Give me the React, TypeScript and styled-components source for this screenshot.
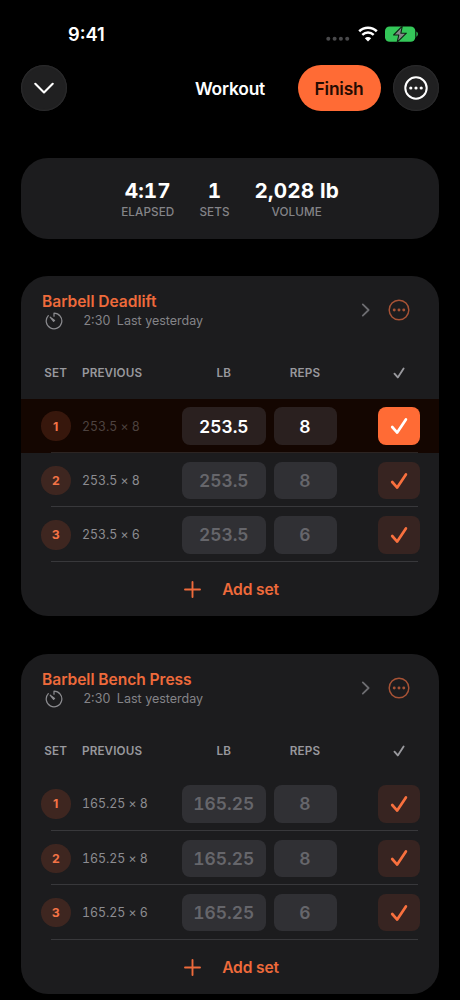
import React from "react";
import styled, { createGlobalStyle } from "styled-components";

const accent = "#ff6b35";

const GlobalStyle = createGlobalStyle`
  *, *::before, *::after { box-sizing: border-box; }
  body { margin: 0; background: #000; }
  button { border: 0; padding: 0; margin: 0; font: inherit; color: inherit; background: none; }
  svg { display: block; flex: none; }
`;

const Screen = styled.main`
  width: 460px;
  height: 1000px;
  overflow: hidden;
  background: #000;
  color: #fff;
  font-family: Inter, "Liberation Sans", sans-serif;
  padding: 0 21px;
`;

const StatusBar = styled.div`
  height: 65px;
  padding: 3px 21px 0 47px;
  display: flex;
  align-items: center;
  justify-content: space-between;
`;

const Clock = styled.span`
  font-size: 18.3px;
  font-weight: 600;
  letter-spacing: 0;
  line-height: 24px;
`;

const StatusIcons = styled.div`
  display: flex;
  align-items: center;
  gap: 7.5px;
`;

const NavBar = styled.header`
  height: 46px;
  display: grid;
  grid-template-columns: 1fr auto 1fr;
  align-items: center;
`;

const NavTitle = styled.h1`
  margin: 0;
  padding-top: 1px;
  font-size: 17.4px;
  font-weight: 600;
  letter-spacing: -0.2px;
  line-height: 24px;
`;

const NavActions = styled.div`
  display: flex;
  justify-content: flex-end;
  gap: 12.5px;
`;

const RoundButton = styled.button`
  width: 46px;
  height: 46px;
  border-radius: 50%;
  display: flex;
  align-items: center;
  justify-content: center;
  background: #202021;
  box-shadow: inset 0 0 1.5px 0.5px #343436;
`;

const FinishButton = styled.button`
  width: 83px;
  height: 46px;
  border-radius: 23px;
  background: ${accent};
  color: #260b02;
  font-size: 17.4px;
  font-weight: 600;
  letter-spacing: -0.2px;
`;

const Summary = styled.section`
  height: 80.6px;
  margin-top: 47px;
  padding-top: 20px;
  border-radius: 27px;
  background: #1c1c1e;
  display: flex;
  justify-content: center;
  gap: 25px;
`;

const Stat = styled.div`
  display: flex;
  flex-direction: column;
  align-items: center;
`;

const StatValue = styled.strong`
  font-size: 20.7px;
  line-height: 26px;
  font-weight: 650;
  font-variant-numeric: tabular-nums;
  letter-spacing: 0.12px;
`;

const StatLabel = styled.span`
  font-size: 11.7px;
  line-height: 16px;
  font-weight: 500;
  letter-spacing: 0.1px;
  color: #848488;
`;

const Card = styled.section`
  height: 340.6px;
  margin-top: 37.2px;
  border-radius: 27px;
  overflow: hidden;
  background: #1c1c1e;
`;

const CardHeader = styled.header`
  height: 70px;
  padding: 15px 29.2px 0 21px;
  display: flex;
`;

const Heading = styled.div`
  flex: 1;
`;

const ExerciseName = styled.h2`
  margin: 0;
  font-size: 15.6px;
  line-height: 21px;
  font-weight: 600;
  letter-spacing: -0.05px;
  color: #ee6a3b;
`;

const Meta = styled.div`
  display: flex;
  align-items: center;
  padding-left: 3px;
  height: 18px;
  font-size: 12.5px;
  color: #848488;
`;

const RestTime = styled.span`
  margin: 0 6.5px 0 20.5px;
`;

const HeaderActions = styled.div`
  display: flex;
  align-items: center;
  gap: 18px;
  height: 39px;
`;

const setColumns = "29.5px 111.5px 83.5px 8px 63px 1fr 42px";

const HeadRow = styled.div`
  height: 53.2px;
  padding: 19px 19px 0 20px;
  display: grid;
  grid-template-columns: ${setColumns};
  align-items: start;
  font-size: 11.7px;
  font-weight: 600;
  line-height: 16px;
  letter-spacing: 0.12px;
  color: #98989d;
`;

const Head = styled.span<{ $column: number; $leading?: boolean }>`
  grid-column: ${(p) => p.$column};
  display: flex;
  height: 16px;
  align-items: center;
  justify-content: ${(p) => (p.$leading ? "flex-start" : "center")};
  padding-left: ${(p) => (p.$leading ? "11.5px" : "0")};
`;

const Row = styled.div<{ $done: boolean }>`
  height: 54.4px;
  padding: 0 19px 0 20px;
  display: grid;
  grid-template-columns: ${setColumns};
  align-items: center;
  background:
    linear-gradient(${(p) => (p.$done ? "#2c2422" : "#38383b")}, ${(p) => (p.$done ? "#2c2422" : "#38383b")})
      30px 53px / 367px 1px no-repeat,
    ${(p) => (p.$done ? "#140601" : "transparent")};
`;

const SetBadge = styled.span<{ $done: boolean }>`
  width: 29.5px;
  height: 29.5px;
  border-radius: 50%;
  display: flex;
  align-items: center;
  justify-content: center;
  background: ${(p) => (p.$done ? "#37170c" : "#3e2620")};
  color: #f37346;
  font-size: 12.3px;
  font-weight: 700;
`;

const Previous = styled.span<{ $done: boolean }>`
  padding-left: 11.5px;
  font-size: 12.4px;
  letter-spacing: -0.05px;
  font-variant-numeric: tabular-nums;
  font-feature-settings: "calt" 0;
  color: ${(p) => (p.$done ? "#4d423f" : "#8c8c91")};
`;

const Field = styled.span<{ $column: number; $done: boolean }>`
  grid-column: ${(p) => p.$column};
  height: 37.5px;
  border-radius: 8px;
  display: flex;
  align-items: center;
  justify-content: center;
  background: ${(p) => (p.$done ? "#2a201f" : "#303034")};
  color: ${(p) => (p.$done ? "#fff" : "#66666b")};
  font-size: 17.4px;
  font-weight: 600;
  font-variant-numeric: tabular-nums;
`;

const CheckButton = styled.button<{ $done: boolean }>`
  grid-column: 7;
  width: 42px;
  height: 37.5px;
  border-radius: 8px;
  display: flex;
  align-items: center;
  justify-content: center;
  background: ${(p) => (p.$done ? accent : "#372421")};
  color: ${(p) => (p.$done ? "#fff" : "#f8703e")};
`;

const AddSet = styled.button`
  width: 100%;
  height: 54px;
  padding-left: 3px;
  padding-top: 1px;
  display: flex;
  align-items: center;
  justify-content: center;
  gap: 21px;
  color: #ee6a3b;
  font-size: 15.6px;
  font-weight: 600;
  letter-spacing: -0.15px;
`;

function CheckIcon({ size, width }: { size: number; width: number }) {
  return (
    <svg width={size} height={size} viewBox="0 0 18 18" fill="none" stroke="currentColor" strokeWidth={width} strokeLinecap="round" strokeLinejoin="round">
      <path d="M2.2 10 7.2 15.6 15.9 2.4" />
    </svg>
  );
}

function MoreIcon({ size, color, stroke }: { size: number; color: string; stroke: number }) {
  return (
    <svg width={size} height={size} viewBox="0 0 24 24" fill="none">
      <circle cx="12" cy="12" r="10.7" stroke={color} strokeWidth={stroke} />
      <circle cx="6.8" cy="12" r="1.6" fill={color} />
      <circle cx="12" cy="12" r="1.6" fill={color} />
      <circle cx="17.2" cy="12" r="1.6" fill={color} />
    </svg>
  );
}

function TimerIcon() {
  return (
    <svg width="18" height="18" viewBox="0 0 18 18" fill="none" stroke="#8a8a8e" strokeWidth="1.25" strokeLinecap="round" strokeLinejoin="round">
      <path d="M9 4.2V1.2A7.8 7.8 0 1 1 3.3 3.7" />
      <path d="M5.2 5.2 9.6 8.4 8.6 9.4Z" fill="#8a8a8e" />
    </svg>
  );
}

function SignalDots() {
  return (
    <svg width="24" height="14" viewBox="0 0 24 14" fill="#49494b">
      {[2.3, 8.6, 14.9, 21.2].map((x) => (
        <circle key={x} cx={x} cy="11.8" r="2" />
      ))}
    </svg>
  );
}

function WifiIcon() {
  return (
    <svg width="20" height="16" viewBox="0 0 20 16" fill="none" stroke="#fff">
      <path d="M1.2 5.3C6.2.6 13.8.6 18.8 5.3" strokeWidth="2.6" />
      <path d="M4.3 8.8c3.3-3 8.1-3 11.4 0" strokeWidth="2.5" />
      <path d="M10 15.6 6.8 12.3c1.8-1.7 4.6-1.7 6.4 0Z" fill="#fff" stroke="none" />
    </svg>
  );
}

function BatteryIcon() {
  return (
    <svg width="33" height="18" viewBox="0 0 33 18">
      <rect x="0" y="1.4" width="30.3" height="15.4" rx="4.6" fill="#34c759" />
      <path d="M31.4 6.5c1.9.8 1.9 4.4 0 5.2Z" fill="#34c759" />
      <path d="M17.3 1.2 8.6 10h5.2l-1.6 7.2L21.4 8.2h-5.5Z" fill="#858789" stroke="#0b2412" strokeWidth="1.1" strokeLinejoin="round" />
    </svg>
  );
}

type Exercise = { name: string; sets: { weight: string; reps: number; done: boolean }[] };

const exercises: Exercise[] = [
  {
    name: "Barbell Deadlift",
    sets: [
      { weight: "253.5", reps: 8, done: true },
      { weight: "253.5", reps: 8, done: false },
      { weight: "253.5", reps: 6, done: false },
    ],
  },
  {
    name: "Barbell Bench Press",
    sets: [
      { weight: "165.25", reps: 8, done: false },
      { weight: "165.25", reps: 8, done: false },
      { weight: "165.25", reps: 6, done: false },
    ],
  },
];

function ExerciseCard({ name, sets }: Exercise) {
  return (
    <Card>
      <CardHeader>
        <Heading>
          <ExerciseName>{name}</ExerciseName>
          <Meta>
            <TimerIcon />
            <RestTime>2:30</RestTime>
            <span>Last yesterday</span>
          </Meta>
        </Heading>
        <HeaderActions>
          <svg width="9" height="14" viewBox="0 0 9 14" fill="none" stroke="#6c6c70" strokeWidth="1.8" strokeLinecap="round" strokeLinejoin="round">
            <path d="M1.8 1.4 7.6 7 1.8 12.6" />
          </svg>
          <MoreIcon size={22} color="#a65235" stroke={1.6} />
        </HeaderActions>
      </CardHeader>
      <HeadRow>
        <Head $column={1}>SET</Head>
        <Head $column={2} $leading>PREVIOUS</Head>
        <Head $column={3}>LB</Head>
        <Head $column={5}>REPS</Head>
        <Head $column={7}>
          <CheckIcon size={12} width={2.8} />
        </Head>
      </HeadRow>
      {sets.map((set, i) => (
        <Row key={i} $done={set.done}>
          <SetBadge $done={set.done}>{i + 1}</SetBadge>
          <Previous $done={set.done}>
            {set.weight} × {set.reps}
          </Previous>
          <Field $column={3} $done={set.done}>{set.weight}</Field>
          <Field $column={5} $done={set.done}>{set.reps}</Field>
          <CheckButton $done={set.done} aria-label="Complete set">
            <CheckIcon size={18} width={2.7} />
          </CheckButton>
        </Row>
      ))}
      <AddSet>
        <svg width="17" height="17" viewBox="0 0 17 17" stroke="currentColor" strokeWidth="1.9" strokeLinecap="round">
          <path d="M8.5 1v15M1 8.5h15" />
        </svg>
        Add set
      </AddSet>
    </Card>
  );
}

export default function App() {
  return (
    <Screen>
      <GlobalStyle />
      <StatusBar>
        <Clock>9:41</Clock>
        <StatusIcons>
          <SignalDots />
          <WifiIcon />
          <BatteryIcon />
        </StatusIcons>
      </StatusBar>
      <NavBar>
        <RoundButton aria-label="Minimise">
          <svg width="20" height="12" viewBox="0 0 20 12" fill="none" stroke="#fff" strokeWidth="2.1" strokeLinecap="round" strokeLinejoin="round">
            <path d="M1.3 1.8 10 10.4 18.7 1.8" />
          </svg>
        </RoundButton>
        <NavTitle>Workout</NavTitle>
        <NavActions>
          <FinishButton>Finish</FinishButton>
          <RoundButton aria-label="More options">
            <MoreIcon size={24} color="#fff" stroke={2} />
          </RoundButton>
        </NavActions>
      </NavBar>
      <Summary>
        <Stat>
          <StatValue>4:17</StatValue>
          <StatLabel>ELAPSED</StatLabel>
        </Stat>
        <Stat>
          <StatValue>1</StatValue>
          <StatLabel>SETS</StatLabel>
        </Stat>
        <Stat>
          <StatValue>2,028 lb</StatValue>
          <StatLabel>VOLUME</StatLabel>
        </Stat>
      </Summary>
      {exercises.map((exercise) => (
        <ExerciseCard key={exercise.name} {...exercise} />
      ))}
    </Screen>
  );
}
